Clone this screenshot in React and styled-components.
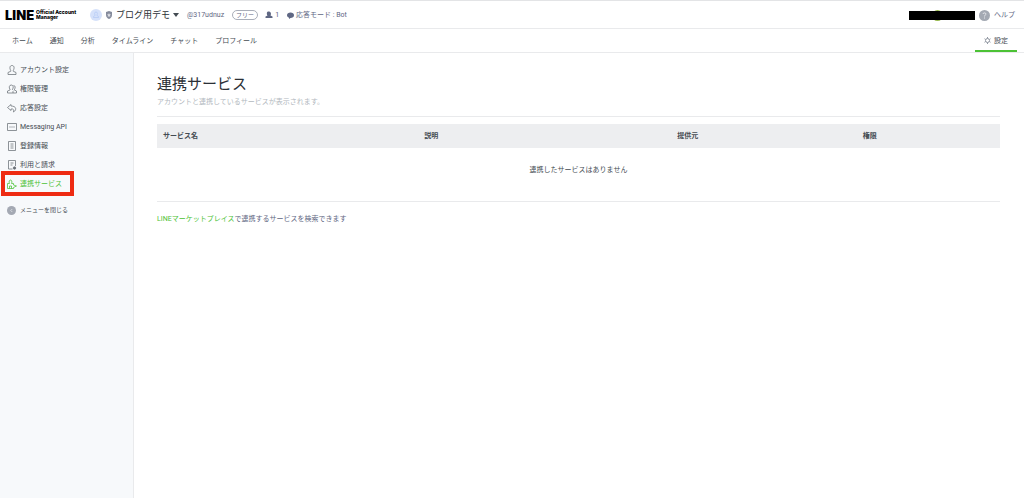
import React from "react";
import styled, { createGlobalStyle, css } from "styled-components";

const colors = {
  text: "#444b52",
  strong: "#2b3036",
  slate: "#5f6783",
  icon: "#6a7077",
  muted: "#b2b8be",
  line: "#e9eaec",
  green: "#4cc235",
  side: "#f7f9fb",
  head: "#edeef0",
  mark: "#ee2b12",
};

const GlobalStyle = createGlobalStyle`
  * {
    box-sizing: border-box;
  }
  body {
    margin: 0;
    background: #fff;
    color: ${colors.text};
    font-family: Roboto, "Noto Sans CJK JP", sans-serif;
    font-size: 7px;
    line-height: 12px;
  }
  a {
    color: inherit;
    text-decoration: none;
  }
  button {
    border: 0;
    padding: 0;
    background: none;
    color: inherit;
    font: inherit;
    cursor: pointer;
  }
  svg {
    display: block;
    flex: none;
  }
`;

const Page = styled.div`
  display: flex;
  flex-direction: column;
  min-height: 100vh;
`;

const TopBar = styled.header`
  display: flex;
  align-items: center;
  height: 29px;
  padding: 1px 9px 0 5px;
  border-top: 1px solid #e3e4e6;
  border-bottom: 1px solid ${colors.line};
  color: ${colors.slate};
`;

const Logo = styled.a`
  display: flex;
  align-items: center;
  gap: 2px;
  width: 74px;
  margin-right: 11px;
  color: #000;
  white-space: nowrap;
`;
Logo.Mark = styled.span`
  font: 900 13px/14px Inter, sans-serif;
`;
Logo.Name = styled.span`
  font: 800 5px/5px Inter, sans-serif;
`;

const Account = styled.button`
  display: flex;
  align-items: center;
  gap: 3px;
  margin-right: 8px;
  color: ${colors.strong};
  font-size: 9px;
`;

const Plan = styled.span`
  margin: 0 7px 0 8px;
  padding: 0 3px;
  border: 1px solid #a9aeb9;
  border-radius: 5px;
  font-size: 6px;
  line-height: 8px;
`;

const Stat = styled.span`
  display: flex;
  align-items: center;
  gap: 2px;
  margin-right: 8px;
`;

const TopEnd = styled.div`
  display: flex;
  align-items: center;
  gap: 4px;
  margin-left: auto;
`;

const UserName = styled.div`
  display: flex;
  align-items: center;
  justify-content: center;
  width: 66px;
  height: 11px;
  padding-right: 10px;
  background: linear-gradient(#000, #000) center / 100% 9px no-repeat;
`;

const Help = styled.a`
  display: flex;
  align-items: center;
  gap: 4px;
`;

const Tabs = styled.nav`
  display: flex;
  height: 24px;
  padding: 0 7px 0 12px;
  gap: 17px;
  border-bottom: 1px solid ${colors.line};
`;

const Tab = styled.a`
  display: flex;
  align-items: center;
  gap: 3px;
  ${(props) =>
    props.$active &&
    css`
      justify-content: center;
      width: 42px;
      margin-left: auto;
      padding-top: 2px;
      border-bottom: 2px solid ${colors.green};
    `}
`;

const Body = styled.div`
  display: flex;
  flex: 1;
`;

const Sidebar = styled.nav`
  width: 134px;
  padding: 7px 0;
  border-right: 1px solid ${colors.line};
  background: ${colors.side};
`;

const SideLink = styled.a`
  position: relative;
  display: flex;
  align-items: center;
  gap: 3px;
  width: 74px;
  height: 19px;
  padding-left: 7px;
  color: ${colors.text};
  svg {
    color: ${colors.icon};
  }
  ${(props) =>
    props.$active &&
    css`
      &,
      svg {
        color: ${colors.green};
      }
      &::after {
        content: "";
        position: absolute;
        inset: -3px 0 -3px 1px;
        border: 4px solid ${colors.mark};
      }
    `}
`;

const Collapse = styled.button`
  display: flex;
  align-items: center;
  gap: 4px;
  margin-top: 11px;
  padding-left: 7px;
  font-size: 6px;
`;

const Main = styled.main`
  flex: 1;
  padding: 21px 24px 21px 23px;
`;

const Title = styled.h1`
  margin: 0;
  color: ${colors.strong};
  font-size: 15px;
  font-weight: 400;
  line-height: 20px;
`;

const Lead = styled.p`
  margin: 2px 0 8px;
  color: ${colors.muted};
`;

const Rule = styled.hr`
  margin: 0 0 7px;
  border: 0;
  border-top: 1px solid ${colors.line};
`;

const Table = styled.table`
  width: 100%;
  border-collapse: collapse;
  table-layout: fixed;
  border-bottom: 1px solid ${colors.line};
  th {
    height: 24px;
    padding: 0 6px;
    background: ${colors.head};
    text-align: left;
    font-weight: 700;
  }
  td {
    height: 53px;
    padding: 0 0 8px;
    text-align: center;
  }
`;

const Note = styled.p`
  margin: 11px 0 0;
  color: ${colors.slate};
  a {
    color: ${colors.green};
  }
`;

const Line = ({ children }) => (
  <svg
    width="10"
    height="10"
    viewBox="0 0 20 20"
    fill="none"
    stroke="currentColor"
    strokeWidth="1.5"
    strokeLinejoin="round"
    aria-hidden="true"
  >
    {children}
  </svg>
);

const menu = [
  [
    "アカウント設定",
    <path d="M10 1C5 1 5 7 7.500 11V12.500L2 15V19H18V15L12.500 12.500V11C15 7 15 1 10 1Z" />,
  ],
  [
    "権限管理",
    <>
      <path d="M12 18H1V14L6 12V10.500C3.500 8 4 2 8.500 2S13.500 8 11 10.500V12" />
      <path d="M13 3C17 3 17 8 15 10.500V12L19 14V18H12V15L14 13" />
    </>,
  ],
  ["応答設定", <path d="M8 3L1 9L8 15V12C13 11 14 14 13 18C20 14 19 6 8 6Z" />],
  [
    "Messaging API",
    <>
      <path d="M1 3H19V17H1Z" />
      <path d="M5 10H7M9 10H11M13 10H15" strokeWidth="2" />
    </>,
  ],
  [
    "登録情報",
    <>
      <path d="M3 1H17V19H3Z" />
      <path d="M7 6H13M7 10H13M7 14H13" />
    </>,
  ],
  [
    "利用と請求",
    <>
      <path d="M11 18H3V1H17V12" />
      <path d="M7 6H13M7 10H11" />
      <circle cx="15" cy="16" r="2.500" fill="currentColor" />
    </>,
  ],
  [
    "連携サービス",
    <>
      <path d="M1 19V9H5C3 5 5 2 7 2S11 5 9 9H13V12L19 14L13 17V19Z" />
      <path d="M5 19V14H9V19" />
    </>,
  ],
];

export default function App() {
  return (
    <Page>
      <GlobalStyle />
      <TopBar>
        <Logo href="#">
          <Logo.Mark>LINE</Logo.Mark>
          <Logo.Name>
            Official Account
            <br />
            Manager
          </Logo.Name>
        </Logo>
        <Account>
          <svg width="12" height="12" viewBox="0 0 24 24" aria-hidden="true">
            <circle cx="12" cy="12" r="12" fill="#d5e1fa" />
            <path
              d="M12 6C8 6 9 11 10.500 12.500L7 15V17H17V15L13.500 12.500C15 11 16 6 12 6Z"
              fill="none"
              stroke="#b4c9f4"
              strokeWidth="1.500"
            />
          </svg>
          <svg width="8" height="8" viewBox="0 0 16 16" aria-hidden="true">
            <path d="M2 2L8 0L14 2V8C14 12 11 15 8 16C5 15 2 12 2 8Z" fill="#858b9c" />
            <path
              d="M8 4L9.200 6.500L12 7L10 9L10.500 12L8 10.500L5.500 12L6 9L4 7L6.800 6.500Z"
              fill="#d9dbe2"
            />
          </svg>
          ブログ用デモ
          <svg width="6" height="4" viewBox="0 0 6 4" aria-hidden="true">
            <path d="M0 0H6L3 4Z" fill={colors.text} />
          </svg>
        </Account>
        <span>@317udnuz</span>
        <Plan>フリー</Plan>
        <Stat>
          <svg width="8" height="8" viewBox="0 0 16 16" fill={colors.slate} aria-hidden="true">
            <path d="M7 1C3 1 3 6 5 9L1 11V14H15V11L11 9C13 6 12 1 7 1Z" />
          </svg>
          1
        </Stat>
        <Stat>
          <svg width="7" height="7" viewBox="0 0 14 14" fill={colors.slate} aria-hidden="true">
            <path d="M7 1C11 1 14 3 14 6.500S11 12 7 12L4 14V11.500C1.500 10.500 0 9 0 6.500C0 3 3 1 7 1Z" />
          </svg>
          応答モード : Bot
        </Stat>
        <TopEnd>
          <UserName>
            <svg width="11" height="11" viewBox="0 0 22 22" aria-hidden="true">
              <circle cx="11" cy="11" r="11" fill="#96b84a" />
              <path d="M0 2H22V20H0Z" fill="#000" />
            </svg>
          </UserName>
          <Help href="#">
            <svg width="11" height="11" viewBox="0 0 22 22" aria-hidden="true">
              <circle cx="11" cy="11" r="11" fill="#a4a9b3" />
              <path
                d="M8 8C8 5 14 5 14 8C14 10 11 10 11 13M11 15V17"
                fill="none"
                stroke="#e6e8ec"
                strokeWidth="2"
              />
            </svg>
            ヘルプ
          </Help>
        </TopEnd>
      </TopBar>
      <Tabs>
        {["ホーム", "通知", "分析", "タイムライン", "チャット", "プロフィール"].map((label) => (
          <Tab key={label} href="#">
            {label}
          </Tab>
        ))}
        <Tab href="#" $active>
          <svg
            width="7"
            height="7"
            viewBox="0 0 14 14"
            fill="none"
            stroke="#9298a3"
            strokeWidth="2"
            aria-hidden="true"
          >
            <circle cx="7" cy="7" r="4" />
            <path d="M7 0V3M7 11V14M1 3.500L3.500 5M10.500 9L13 10.500M1 10.500L3.500 9M10.500 5L13 3.500" />
          </svg>
          設定
        </Tab>
      </Tabs>
      <Body>
        <Sidebar>
          {menu.map(([label, icon]) => (
            <SideLink key={label} href="#" $active={label === "連携サービス"}>
              <Line>{icon}</Line>
              {label}
            </SideLink>
          ))}
          <Collapse>
            <svg width="9" height="9" viewBox="0 0 18 18" aria-hidden="true">
              <circle cx="9" cy="9" r="9" fill="#a4a9b3" />
              <path d="M10.500 6L7.500 9L10.500 12" fill="none" stroke="#e6e8ec" strokeWidth="1.500" />
            </svg>
            メニューを閉じる
          </Collapse>
        </Sidebar>
        <Main>
          <Title>連携サービス</Title>
          <Lead>アカウントと連携しているサービスが表示されます。</Lead>
          <Rule />
          <Table>
            <colgroup>
              <col width="31%" />
              <col width="30%" />
              <col width="22%" />
              <col />
            </colgroup>
            <thead>
              <tr>
                <th>サービス名</th>
                <th>説明</th>
                <th>提供元</th>
                <th>権限</th>
              </tr>
            </thead>
            <tbody>
              <tr>
                <td colSpan="4">連携したサービスはありません</td>
              </tr>
            </tbody>
          </Table>
          <Note>
            <a href="#">LINEマーケットプレイス</a>で連携するサービスを検索できます
          </Note>
        </Main>
      </Body>
    </Page>
  );
}
